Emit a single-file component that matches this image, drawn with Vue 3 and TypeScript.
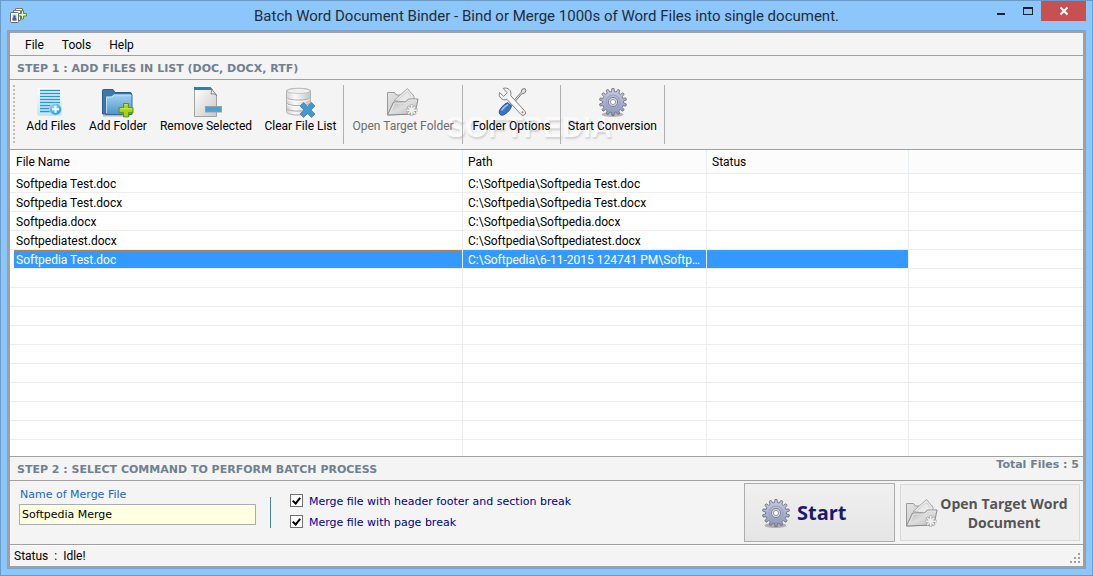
<script setup lang="ts">
import { ref } from 'vue'

interface FileRow {
  name: string
  path: string
}

interface Tool {
  label: string
  icon: string
  size: string
  disabled?: boolean
  divider?: boolean
}

const title = 'Batch Word Document Binder - Bind or Merge 1000s of Word Files into single document.'
const menus = ['File', 'Tools', 'Help']

const tools: Tool[] = [
  { label: 'Add Files', icon: 'i-files', size: 'w-files' },
  { label: 'Add Folder', icon: 'i-folder', size: 'w-folder' },
  { label: 'Remove Selected', icon: 'i-remove', size: 'w-remove' },
  { label: 'Clear File List', icon: 'i-clear', size: 'w-clear', divider: true },
  { label: 'Open Target Folder', icon: 'i-target', size: 'w-target', disabled: true, divider: true },
  { label: 'Folder Options', icon: 'i-options', size: 'w-options', divider: true },
  { label: 'Start Conversion', icon: 'i-gear', size: 'w-start', divider: true },
]

const files: FileRow[] = [
  { name: 'Softpedia Test.doc', path: 'C:\\Softpedia\\Softpedia Test.doc' },
  { name: 'Softpedia Test.docx', path: 'C:\\Softpedia\\Softpedia Test.docx' },
  { name: 'Softpedia.docx', path: 'C:\\Softpedia\\Softpedia.docx' },
  { name: 'Softpediatest.docx', path: 'C:\\Softpedia\\Softpediatest.docx' },
  { name: 'Softpedia Test.doc', path: 'C:\\Softpedia\\6-11-2015 124741 PM\\Softpe...' },
]
const blankRows = 10

const selected = ref(4)
const mergeName = ref('Softpedia Merge')
const sectionBreak = ref(true)
const pageBreak = ref(true)

function gearPath(teeth: number, outer: number, inner: number, c: number): string {
  const step = (Math.PI * 2) / teeth
  const pt = (r: number, a: number) => `${(c + r * Math.cos(a)).toFixed(2)} ${(c + r * Math.sin(a)).toFixed(2)}`
  const parts: string[] = []
  for (let i = 0; i < teeth; i++) {
    const a = i * step - Math.PI / 2
    parts.push(pt(inner, a - step * 0.3), pt(outer, a - step * 0.18), pt(outer, a + step * 0.18), pt(inner, a + step * 0.3))
  }
  return `M${parts.join('L')}Z`
}
const gear = gearPath(14, 13.5, 10.5, 16)
</script>

<template>
  <div class="window">
    <svg class="defs" aria-hidden="true">
      <defs>
        <linearGradient id="g-sky" x1="0" y1="0" x2="0" y2="1">
          <stop offset="0" stop-color="#a5d3ef" />
          <stop offset="1" stop-color="#4f93cd" />
        </linearGradient>
        <linearGradient id="g-page" x1="0" y1="0" x2="1" y2="1">
          <stop offset="0" stop-color="#ffffff" />
          <stop offset="1" stop-color="#c9c9c9" />
        </linearGradient>
        <linearGradient id="g-disk" x1="0" y1="0" x2="1" y2="0">
          <stop offset="0" stop-color="#d2d2d2" />
          <stop offset="0.35" stop-color="#fafafa" />
          <stop offset="1" stop-color="#c4c4c4" />
        </linearGradient>
        <linearGradient id="g-back" x1="0" y1="0" x2="1" y2="1">
          <stop offset="0" stop-color="#e4e4e4" />
          <stop offset="1" stop-color="#bcbcbc" />
        </linearGradient>
        <linearGradient id="g-flap" x1="0" y1="0" x2="1" y2="1">
          <stop offset="0" stop-color="#a9a9a9" />
          <stop offset="0.5" stop-color="#dedede" />
          <stop offset="1" stop-color="#b5b5b5" />
        </linearGradient>
        <linearGradient id="g-gear" x1="0" y1="0" x2="0" y2="1">
          <stop offset="0" stop-color="#c9cde2" />
          <stop offset="1" stop-color="#8f96ba" />
        </linearGradient>
        <radialGradient id="g-bubble" cx="0.4" cy="0.3" r="0.8">
          <stop offset="0" stop-color="#8fe0f8" />
          <stop offset="1" stop-color="#1290cc" />
        </radialGradient>
        <linearGradient id="g-glow" x1="0" y1="0" x2="0" y2="1">
          <stop offset="0" stop-color="#ffffff" />
          <stop offset="1" stop-color="#bfe6f8" />
        </linearGradient>
      </defs>

      <symbol id="i-files" viewBox="0 0 32 32">
        <rect x="2" y="2" width="25" height="28" rx="3" fill="url(#g-glow)" />
        <path d="M5 4.500h20M5 7.500h20M5 10.500h20M5 13.500h20M5 16.500h20M5 19.500h12M5 22.500h10M5 25.500h10" stroke="#2d94c9" stroke-width="1.500" />
        <circle cx="20.500" cy="23.200" r="6" fill="url(#g-bubble)" stroke="#bdeafa" stroke-width="0.800" />
        <path d="M20.500 19.700v7M17 23.200h7" stroke="#fff" stroke-width="2" />
      </symbol>

      <symbol id="i-folder" viewBox="0 0 32 32">
        <path d="M1 29.500h27" stroke="#000" stroke-opacity="0.250" stroke-width="2" />
        <path d="M0.500 28V4.500q0-1 1-1h9.500l2 3h15q1.500 0 1.500 1.500v20z" fill="#3f77a8" stroke="#2a5c8c" />
        <path d="M3.500 28.500V11q0-1 1-1h5l2-2h17.500q1 0 1 1v19.500z" fill="url(#g-sky)" stroke="#346fa3" />
        <path d="M4.500 27V11h5.500l2-2h16.500" fill="none" stroke="#cfe9f9" stroke-opacity="0.800" />
        <path d="M21.500 17.500h5v4.200h4.500v5h-4.500v4.200h-5v-4.200h-4.500v-5h4.500z" fill="#a4d316" stroke="#5d9405" />
        <path d="M22.500 18.800h3M18.200 22.800h12" stroke="#d8f26a" stroke-width="0.900" />
      </symbol>

      <symbol id="i-remove" viewBox="0 0 32 32">
        <path d="M4.500 2.500h16l6 6.500v21.500h-22z" fill="url(#g-page)" stroke="#a2a2a2" />
        <path d="M4 1h16.500l2.500 3h-19z" fill="#2c7fb6" />
        <path d="M20.500 1.500c1.500 2 1 4.500 0.500 6.500 2-0.500 4.500 0 5.700 1.500z" fill="#f4f4f4" stroke="#777" stroke-width="0.900" />
        <rect x="15.500" y="20.500" width="16" height="5.500" fill="#4ba0d3" stroke="#91a3af" />
      </symbol>

      <symbol id="i-clear" viewBox="0 0 32 32">
        <path d="M1.500 5c0-3.600 24-3.600 24 0v21c0 4-24 4-24 0z" fill="url(#g-disk)" stroke="#b3b3b3" />
        <ellipse cx="13.500" cy="5" rx="11.500" ry="2.500" fill="#f1f1f1" stroke="#bcbcbc" stroke-width="0.800" />
        <path d="M1.500 11.500c1 3.500 23 3.500 24 0M1.500 17c1 3.500 23 3.500 24 0M1.500 22.500c1 3.500 23 3.500 24 0" fill="none" stroke="#a8a8a8" />
        <path d="M2 12.700c1 3.500 22 3.500 23 0M2 18.200c1 3.500 22 3.500 23 0" fill="none" stroke="#fff" stroke-width="0.800" />
        <path d="M18.500 16.500l4 4 4-4 3.500 3.500-4 4 4 4-3.500 3.500-4-4-4 4-3.500-3.500 4-4-4-4z" fill="#3f9ad1" stroke="#6e8798" />
      </symbol>

      <symbol id="i-target" viewBox="0 0 32 32">
        <path d="M0.500 29V6.500h7l2 2.500h17v19z" fill="url(#g-back)" stroke="#9a9a9a" />
        <path d="M7 14.500L20.500 2.500l6.500 8v7z" fill="#e9e9e9" stroke="#ababab" />
        <path d="M10 14.500l10.500-9 3.500 5" fill="none" stroke="#d0d0d0" />
        <path d="M0.500 29L6.500 16h12l3-3h9.500l-3 15z" fill="url(#g-flap)" stroke="#8c8c8c" />
        <path d="M2.500 28l5-11h11.500l3-3h7.500" fill="none" stroke="#f0f0f0" stroke-width="0.800" />
        <path d="M24.700 18.500v11.500M19 24.200h11.500M20.700 20.200l8 8M28.700 20.200l-8 8" stroke="#a8a8a8" stroke-width="2.800" />
        <path d="M24.700 19v10.500M19.500 24.200h10.500M21.200 20.700l7 7M28.200 20.700l-7 7" stroke="#f0f0f0" stroke-width="1.600" />
      </symbol>

      <symbol id="i-options" viewBox="0 0 32 32">
        <path d="M14 18.500L25 6.500l1-3.200 3-0.800 1 2.200-1.500 2.500-3 0.800L15.500 20z" fill="#dedede" stroke="#727272" stroke-width="0.900" />
        <path d="M4 23.500c2-3 5-6.500 8-6.800l3.300 3.300c0 3-4 7-7.500 8.800-3 1.500-6-1.300-3.800-5.300z" fill="#3d73c5" stroke="#29549a" />
        <path d="M5.500 24.500c2-3 4-5 6.500-6" fill="none" stroke="#9fc3f2" stroke-width="1.500" />
        <path d="M7.200 2.400c4.500-1.500 9 2 7.500 7.200l14 15.200c2.500 3-1 6.200-3.800 3.600L11 13.500c-5 1.500-8.800-2.600-7.500-7l4.200 3.800 3.500-3.500z" fill="#f2f2f2" stroke="#858585" />
        <path d="M13 11.500L26.500 26" stroke="#fff" stroke-width="1.800" />
        <circle cx="26.500" cy="26.300" r="1" fill="#8a8a8a" />
      </symbol>

      <symbol id="i-gear" viewBox="0 0 32 32">
        <ellipse cx="15.500" cy="28.500" rx="11" ry="2.500" fill="#000" fill-opacity="0.250" />
        <path :d="gear" fill="url(#g-gear)" stroke="#6e7285" stroke-width="0.900" />
        <circle cx="16" cy="16" r="7" fill="none" stroke="#9aa0c0" stroke-width="1.200" />
        <circle cx="16" cy="16" r="4.600" fill="#d7d9e2" stroke="#74788a" stroke-width="0.900" />
        <circle cx="16" cy="16" r="2.600" fill="#fbfbfb" stroke="#8b8e9b" stroke-width="0.900" />
      </symbol>
    </svg>

    <header class="titlebar">
      <svg class="appicon" viewBox="0 0 17 17" aria-hidden="true">
        <path d="M5.500 1.500h7v10h-7z" fill="#fff" stroke="#777" />
        <path d="M3.500 3.500h7v10h-7z" fill="#fff" stroke="#777" />
        <rect x="0.500" y="5.500" width="8" height="10" rx="1" fill="#fff" stroke="#666" />
        <path d="M2.500 7.500h4v6h-4z" fill="#a9bde0" />
        <path d="M3.500 8.500h2v2l1 1v2h-4v-2l1-1z" fill="#445d94" />
        <path d="M11.500 3.500h2v3h3v2.500h-3v3h-2v-3h-3V6.500h3z" fill="#e2f5c8" stroke="#4f9410" />
      </svg>
      <h1>{{ title }}</h1>
      <div class="controls">
        <button type="button" aria-label="Minimize">
          <svg viewBox="0 0 12 10"><path d="M2 7h8v2H2z" fill="#222" /></svg>
        </button>
        <button type="button" aria-label="Maximize">
          <svg viewBox="0 0 12 10"><path d="M1 1h10v8H1zM2 3v5h8V3z" fill="#222" fill-rule="evenodd" /></svg>
        </button>
        <button type="button" class="close" aria-label="Close">
          <svg viewBox="0 0 12 10"><path d="M2.500 1.500l7 7M9.500 1.500l-7 7" stroke="#fff" stroke-width="2" /></svg>
        </button>
      </div>
    </header>

    <main class="client">
      <nav class="menubar">
        <button v-for="m in menus" :key="m" type="button">{{ m }}</button>
      </nav>

      <h2 class="step">STEP 1 : ADD FILES IN LIST (DOC, DOCX, RTF)</h2>

      <div class="toolbar">
        <span class="watermark" aria-hidden="true">SOFTPEDIA</span>
        <span class="grip"></span>
        <template v-for="t in tools" :key="t.label">
          <button type="button" class="tool" :class="t.size" :disabled="t.disabled">
            <svg class="icon" aria-hidden="true"><use :href="'#' + t.icon" /></svg>
            <span>{{ t.label }}</span>
          </button>
          <span v-if="t.divider" class="divider"></span>
        </template>
      </div>

      <div class="list">
        <table>
          <colgroup>
            <col class="c-name" />
            <col class="c-path" />
            <col class="c-status" />
            <col />
          </colgroup>
          <thead>
            <tr>
              <th>File Name</th>
              <th>Path</th>
              <th>Status</th>
              <th></th>
            </tr>
          </thead>
          <tbody>
            <tr v-for="(f, i) in files" :key="i" :class="{ selected: i === selected }" @click="selected = i">
              <td>{{ f.name }}</td>
              <td>{{ f.path }}</td>
              <td></td>
              <td></td>
            </tr>
            <tr v-for="n in blankRows" :key="'b' + n">
              <td></td>
              <td></td>
              <td></td>
              <td></td>
            </tr>
          </tbody>
        </table>
      </div>

      <div class="step step2">
        <h2>STEP 2 : SELECT COMMAND TO PERFORM BATCH PROCESS</h2>
        <span class="total">Total Files : {{ files.length }}</span>
      </div>

      <section class="panel">
        <div class="field">
          <label for="merge">Name of Merge File</label>
          <input id="merge" v-model="mergeName" type="text" />
        </div>
        <div class="checks">
          <label><input v-model="sectionBreak" type="checkbox" /><span>Merge file with header footer and section break</span></label>
          <label><input v-model="pageBreak" type="checkbox" /><span>Merge file with page break</span></label>
        </div>
        <div class="actions">
          <button type="button" class="start">
            <svg class="icon" aria-hidden="true"><use href="#i-gear" /></svg>
            <span>Start</span>
          </button>
          <button type="button" class="open" disabled>
            <svg class="icon" aria-hidden="true"><use href="#i-target" /></svg>
            <span>Open Target Word Document</span>
          </button>
        </div>
      </section>

      <footer class="statusbar">
        <span>Status&nbsp; :&nbsp; Idle!</span>
        <svg class="size-grip" viewBox="0 0 10 10" aria-hidden="true">
          <path d="M8 0h2v2h-2zM4 4h2v2h-2zM8 4h2v2h-2zM0 8h2v2h-2zM4 8h2v2h-2zM8 8h2v2h-2z" fill="#a0a0a0" />
        </svg>
      </footer>
    </main>
  </div>
</template>

<style>
body {
  margin: 0;
}
</style>

<style scoped>
* {
  box-sizing: border-box;
}

.window {
  display: flex;
  flex-direction: column;
  height: 100vh;
  padding: 0 6px 6px;
  border: 1px solid #6a9bc8;
  background: #8cc6fa;
  font: 12px/16px Roboto, 'Open Sans', sans-serif;
  color: #000;
  overflow: hidden;
}

.defs {
  position: absolute;
  width: 0;
  height: 0;
}

button {
  margin: 0;
  padding: 0;
  border: 0;
  background: none;
  font: inherit;
  color: inherit;
}

h1,
h2 {
  margin: 0;
}

.titlebar {
  display: grid;
  grid-template-columns: 110px 1fr 110px;
  flex: none;
  height: 29px;
}

.appicon {
  width: 17px;
  height: 17px;
  margin: 6px 3px;
}

h1 {
  font-size: 15px;
  line-height: 31px;
  font-weight: 400;
  text-align: center;
  white-space: nowrap;
  color: #1f2d3b;
}

.controls {
  display: flex;
  justify-content: flex-end;
  height: 20px;
}

.controls button {
  display: flex;
  align-items: center;
  justify-content: center;
  width: 27px;
}

.controls svg {
  width: 12px;
  height: 10px;
}

.controls .close {
  width: 45px;
  background: #c75050;
}

.client {
  display: flex;
  flex: 1;
  flex-direction: column;
  min-height: 0;
  margin: 1px;
  border: 2px solid #a0a0a0;
  outline: 1px solid #7ba5cf;
  background: #f4f4f4;
}

.menubar {
  display: flex;
  flex: none;
  gap: 18px;
  height: 23px;
  padding: 2px 0 0 15px;
  border-bottom: 1px solid #a0a0a0;
}

.step {
  flex: none;
  height: 24px;
  padding: 0 4px 0 7px;
  border-bottom: 1px solid #a0a0a0;
}

.step,
.step h2 {
  font: bold 11px/26px 'DejaVu Sans', Verdana, sans-serif;
  color: #708090;
  white-space: nowrap;
}

.step2 {
  display: flex;
  justify-content: space-between;
}

.step .total {
  line-height: 16px;
}

.toolbar {
  position: relative;
  z-index: 0;
  display: flex;
  flex: none;
  height: 70px;
  padding: 5px 0 5px 3px;
  border-bottom: 1px solid #a0a0a0;
}

.grip {
  width: 2px;
  margin-right: 5px;
  background: repeating-linear-gradient(#bdbdbd 0 2px, transparent 2px 4px);
}

.tool {
  display: flex;
  flex-direction: column;
  align-items: center;
  padding-top: 1px;
  white-space: nowrap;
}

.tool span {
  line-height: 16px;
}

.tool:disabled {
  color: #6d6d6d;
}

.w-files {
  width: 62px;
}

.w-folder {
  width: 72px;
}

.w-remove {
  width: 104px;
}

.w-clear {
  width: 85px;
}

.w-target {
  width: 118px;
}

.w-options {
  width: 97px;
}

.w-start {
  width: 103px;
}

.divider {
  width: 1px;
  background: #b0b0b0;
}

.icon {
  flex: none;
  width: 32px;
  height: 32px;
}

.watermark {
  position: absolute;
  z-index: -1;
  left: 436px;
  top: 32px;
  font: bold 29px/30px 'Liberation Sans', Arial, sans-serif;
  color: #fafafa;
  text-shadow: 1px 2px 2px rgba(0, 0, 0, 0.14);
  pointer-events: none;
}

.list {
  flex: 1;
  min-height: 0;
  overflow: hidden;
  border-bottom: 1px solid #a0a0a0;
  background: #fff;
}

table {
  width: 100%;
  table-layout: fixed;
  border-collapse: separate;
  border-spacing: 0;
}

.c-name {
  width: 453px;
}

.c-path {
  width: 244px;
}

.c-status {
  width: 202px;
}

th,
td {
  overflow: hidden;
  padding: 0 0 0 5px;
  border-right: 1px solid #ededed;
  border-bottom: 1px solid #ededed;
  font-weight: 400;
  text-align: left;
  text-overflow: ellipsis;
  white-space: nowrap;
}

th {
  height: 24px;
  border-color: #e3edf8;
  background: #fcfcfc;
}

td {
  height: 19px;
  padding-top: 2px;
  line-height: 16px;
}

th:first-child,
td:first-child {
  padding-left: 6px;
}

th:last-child,
td:last-child {
  border-right: 0;
}

.selected td:not(:last-child) {
  background: linear-gradient(90deg, #b98a5a 50%, #3399ff 50%) 0 0 / 2px 1px repeat-x #3399ff;
  background-clip: padding-box;
  color: #fff;
}

.selected td:first-child {
  padding-left: 2px;
  border-left: 4px solid #fff;
}

.panel {
  display: flex;
  flex: none;
  height: 64px;
  padding: 2px 3px 2px 9px;
  border-bottom: 1px solid #a0a0a0;
  font: 11px/14px 'DejaVu Sans', Verdana, sans-serif;
}

.field {
  display: flex;
  flex-direction: column;
  gap: 2px;
  width: 237px;
  padding-top: 5px;
}

.field label {
  padding-left: 1px;
  color: #1a66cc;
}

.field input {
  height: 21px;
  padding: 0 2px;
  border: 1px solid #abadb3;
  background: #ffffe1;
  font: inherit;
  color: #000;
  outline: 0;
}

.checks {
  display: flex;
  flex-direction: column;
  gap: 14px;
  height: 31px;
  margin: 14px 0 0 14px;
  padding-left: 19px;
  border-left: 1px solid #4682b4;
}

.checks label {
  display: flex;
  align-items: center;
  gap: 6px;
  height: 7px;
  color: #00008b;
  white-space: nowrap;
}

.checks label span {
  padding-top: 2px;
}

.checks input {
  flex: none;
  appearance: none;
  width: 13px;
  height: 13px;
  margin: 0;
  border: 1px solid #707070;
  background: #fff;
}

.checks input:checked::after {
  content: '';
  display: block;
  width: 3px;
  height: 6px;
  margin: 1px 0 0 3px;
  border: solid #000;
  border-width: 0 2px 2px 0;
  box-sizing: content-box;
  rotate: 40deg;
}

.actions {
  display: flex;
  gap: 5px;
  margin-left: auto;
  font-family: 'Open Sans', 'Noto Sans', sans-serif;
  font-weight: 700;
}

.actions button {
  display: flex;
  align-items: center;
}

.actions .start {
  gap: 5px;
  width: 151px;
  padding-left: 15px;
  border: 1px solid #acacac;
  background: linear-gradient(#f0f0f0, #e5e5e5);
  font-size: 20px;
  line-height: 26px;
  color: #191970;
}

.actions .open {
  gap: 1px;
  width: 180px;
  margin: 1px 0;
  padding: 0 10px 0 5px;
  border: 1px solid #d9d9d9;
  background: #efefef;
  font-size: 14px;
  line-height: 19px;
  color: #555;
}

.open span {
  flex: 1;
}

.statusbar {
  display: flex;
  flex: none;
  align-items: center;
  justify-content: space-between;
  height: 21px;
  padding: 0 3px 0 4px;
  border-top: 1px solid #fff;
}

.size-grip {
  align-self: flex-end;
  width: 10px;
  height: 10px;
  margin-bottom: 3px;
}
</style>
